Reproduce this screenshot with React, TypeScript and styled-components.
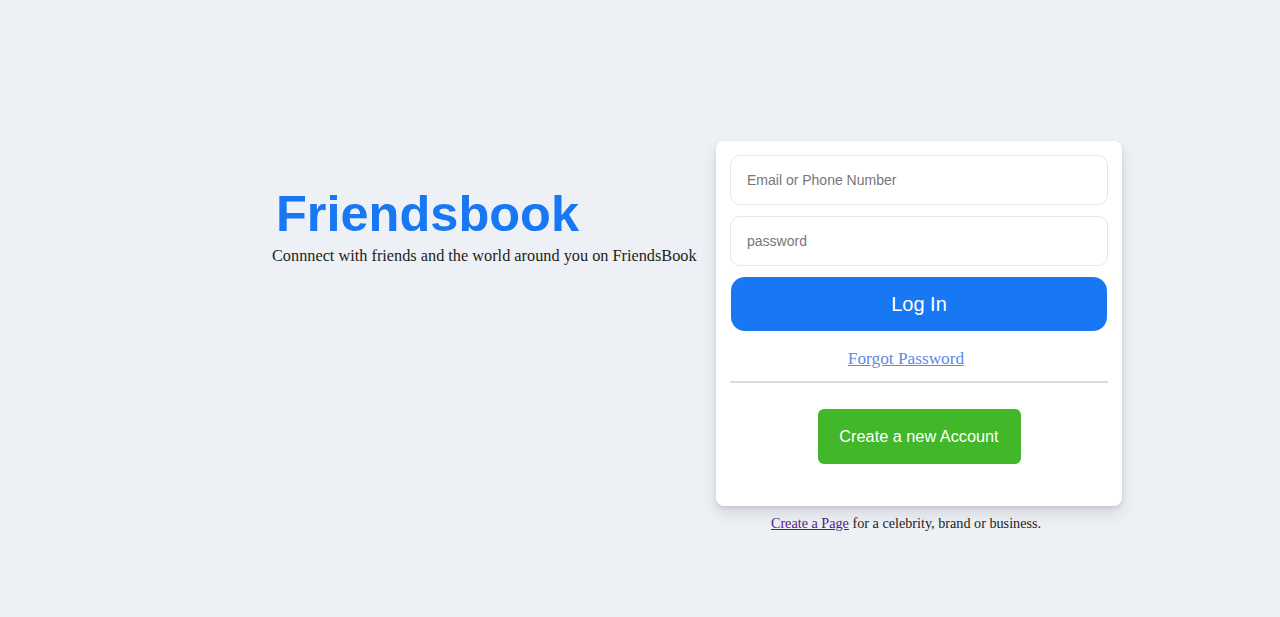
import * as React from 'react';
import styled, { createGlobalStyle } from 'styled-components';

const GlobalStyle = createGlobalStyle`
  html, body {
    margin: 0;
    padding: 0;
    background: #edf0f5;
    font-family: "Liberation Serif", "Times New Roman", serif;
  }
`;

const Wrapper = styled.div`
  width: 100%;
  min-height: 617px;
  display: flex;
  align-items: flex-start;
  gap: 20px;
  padding: 141px 0 0 272px;
  box-sizing: border-box;
`;

const Intro = styled.div`
  width: 424px;
  margin-top: 44px;
`;

const Logo = styled.h1`
  margin: 0 0 0 4px;
  font-family: "Liberation Sans", Arial, sans-serif;
  font-size: 50.5px;
  font-weight: 700;
  line-height: 58px;
  color: #1877f2;
`;

const Tagline = styled.p`
  margin: 3px 0 0;
  font-size: 16.3px;
  line-height: 20px;
  white-space: nowrap;
  color: #1c1e21;
`;

const Side = styled.div`
  display: flex;
  flex-direction: column;
  align-items: center;
`;

const Card = styled.form`
  width: 406px;
  box-sizing: border-box;
  padding: 14px 14px 42px;
  background: #fff;
  border-radius: 8px;
  box-shadow: 0 2px 4px rgba(0, 0, 0, 0.1), 0 8px 16px rgba(0, 0, 0, 0.1);
  display: flex;
  flex-direction: column;
  align-items: center;
`;

const Field = styled.input`
  width: 100%;
  height: 50px;
  box-sizing: border-box;
  margin-bottom: 11px;
  padding: 0 16px;
  border: 1px solid #e4e6eb;
  border-radius: 10px;
  font-family: "Liberation Sans", Arial, sans-serif;
  font-size: 14px;
  color: #1c1e21;
  outline: none;

  &::placeholder {
    color: #777;
  }
`;

const LoginButton = styled.button`
  width: 376px;
  height: 54px;
  border: none;
  border-radius: 14px;
  background: #1877f2;
  color: #fff;
  font-family: "Liberation Sans", Arial, sans-serif;
  font-size: 20px;
  cursor: pointer;
`;

const Forgot = styled.a`
  margin: 18px 26px 0 0;
  font-size: 17.3px;
  line-height: 20px;
  color: #5f8ae6;
  text-decoration: underline;
`;

const Divider = styled.hr`
  width: 100%;
  margin: 12px 0 26px;
  border: none;
  border-top: 2px solid #dadde1;
`;

const CreateButton = styled.button`
  width: 203px;
  height: 55px;
  border: none;
  border-radius: 6px;
  background: #42b72a;
  color: #fff;
  font-family: "Liberation Sans", Arial, sans-serif;
  font-size: 16.3px;
  cursor: pointer;
`;

const PageNote = styled.p`
  margin: 9px 26px 0 0;
  font-size: 14.2px;
  color: #1c1e21;

  a {
    color: #551a8b;
  }
`;

export default function App() {
  return (
    <>
      <GlobalStyle />
      <Wrapper>
        <Intro>
          <Logo>Friendsbook</Logo>
          <Tagline>Connnect with friends and the world around you on FriendsBook</Tagline>
        </Intro>
        <Side>
          <Card onSubmit={(e) => e.preventDefault()}>
            <Field type="text" placeholder="Email or Phone Number" />
            <Field type="password" placeholder="password" />
            <LoginButton type="submit">Log In</LoginButton>
            <Forgot href="#">Forgot Password</Forgot>
            <Divider />
            <CreateButton type="button">Create a new Account</CreateButton>
          </Card>
          <PageNote>
            <a href="#">Create a Page</a> for a celebrity, brand or business.
          </PageNote>
        </Side>
      </Wrapper>
    </>
  );
}
